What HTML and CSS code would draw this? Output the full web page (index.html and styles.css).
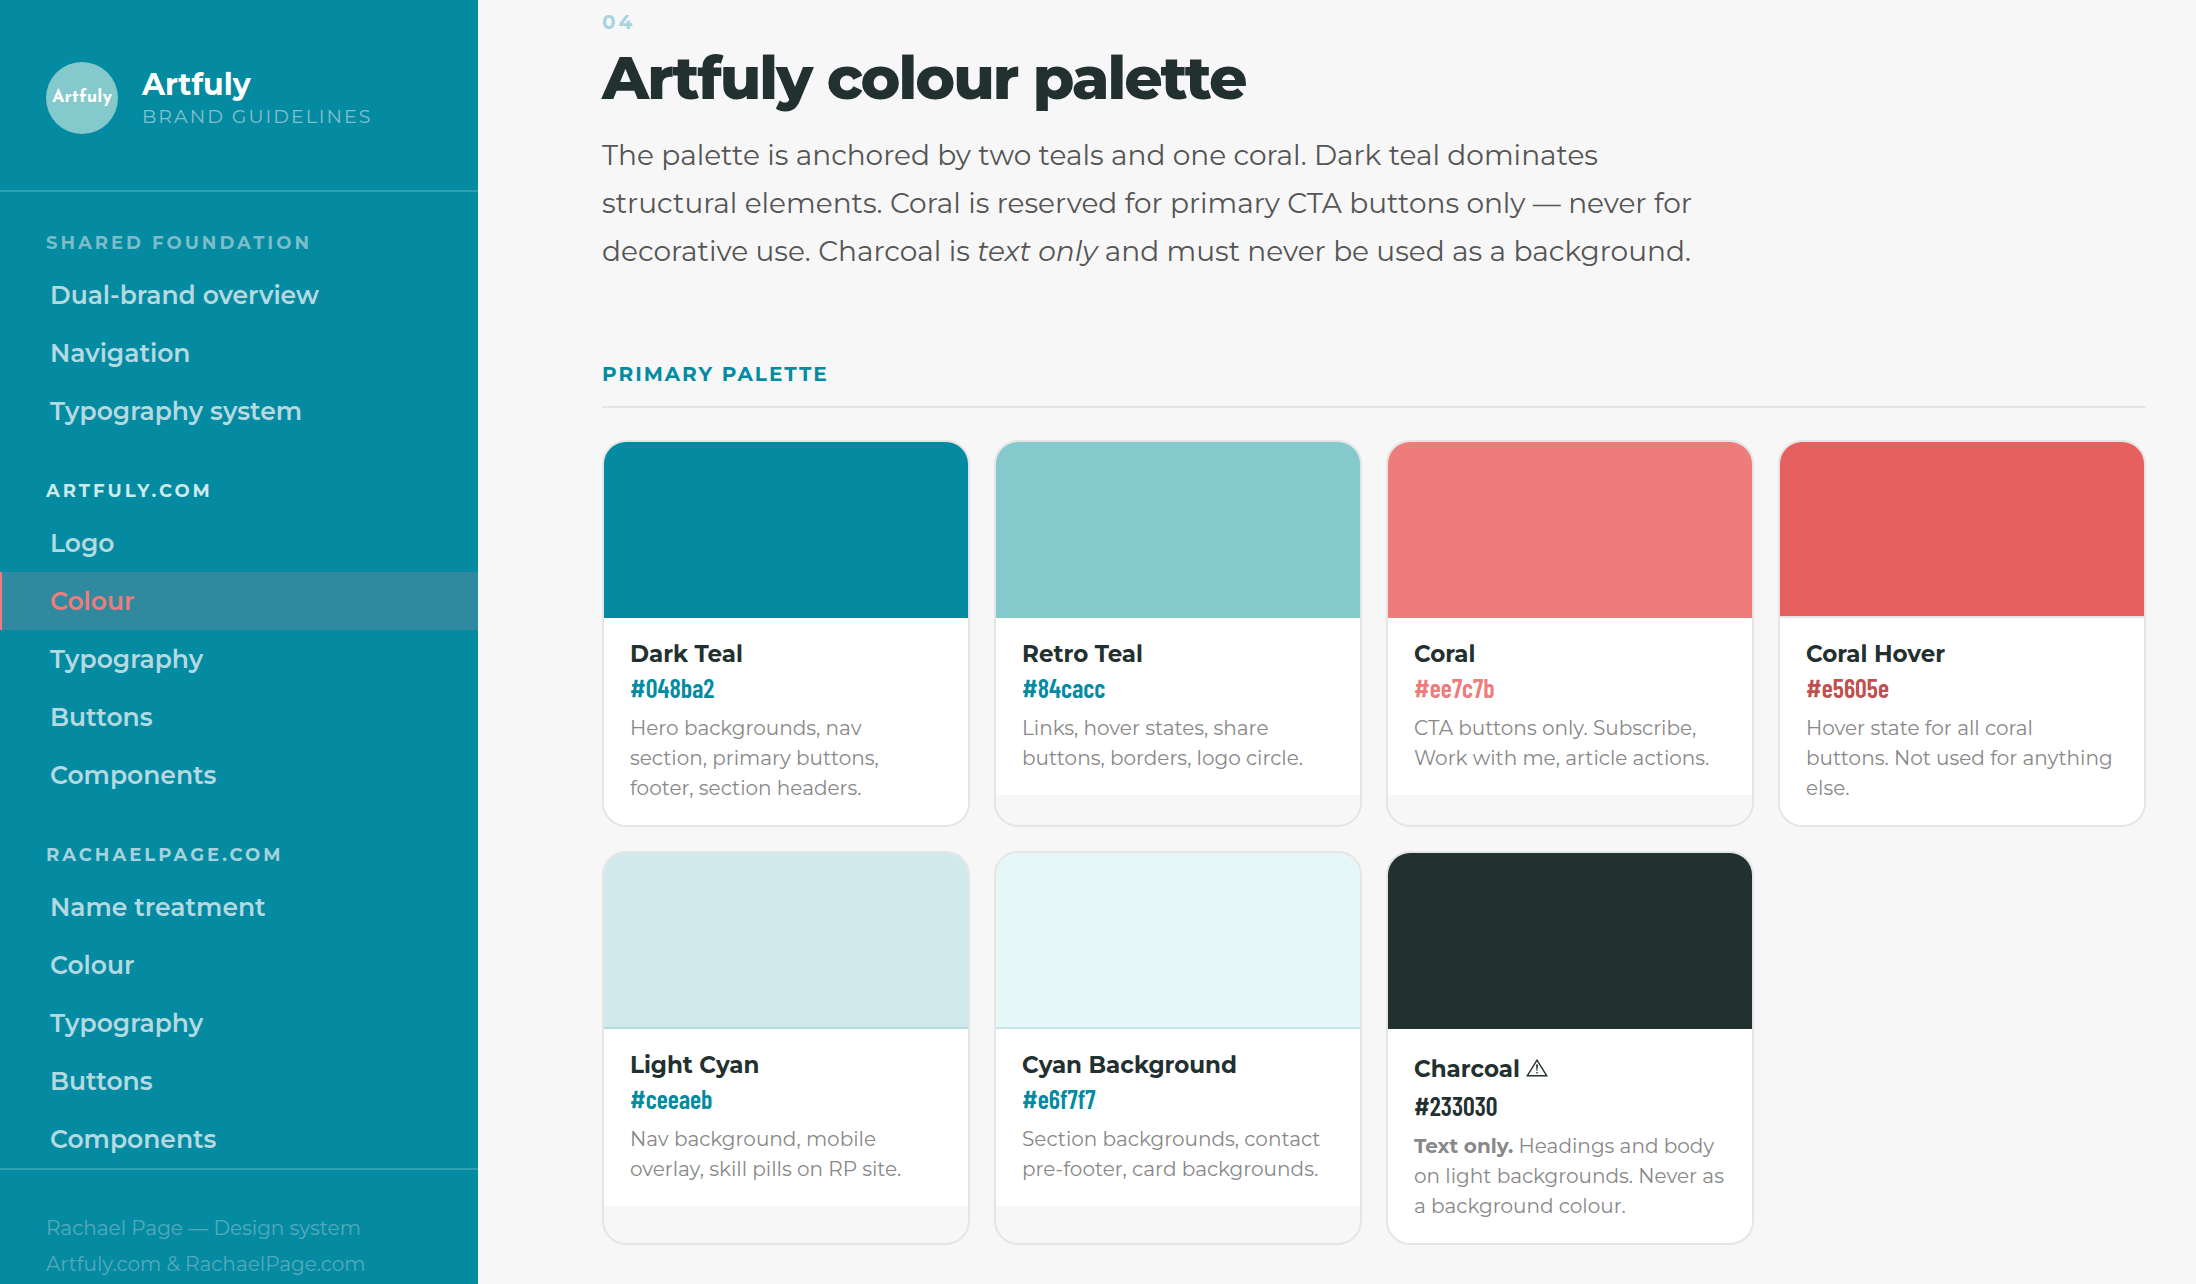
FILE: index.html
```html
<!DOCTYPE html>
<html lang="en">
<head>
  <meta charset="UTF-8">
  <meta name="viewport" content="width=device-width, initial-scale=1">
  <title>Artfuly Brand Guidelines</title>
  <link rel="stylesheet" href="styles.css">
</head>
<body>
  <aside class="sidebar">
    <div class="brand">
      <div class="brand-logo">Artfuly</div>
      <div class="brand-text">
        <div class="brand-name">Artfuly</div>
        <div class="brand-sub">Brand guidelines</div>
      </div>
    </div>

    <nav class="nav">
      <div class="nav-group">
        <div class="nav-label">Shared foundation</div>
        <a href="#overview">Dual-brand overview</a>
        <a href="#navigation">Navigation</a>
        <a href="#type-system">Typography system</a>
      </div>
      <div class="nav-group">
        <div class="nav-label nav-label-current">Artfuly.com</div>
        <a href="#a-logo">Logo</a>
        <a href="#a-colour" class="active">Colour</a>
        <a href="#a-typography">Typography</a>
        <a href="#a-buttons">Buttons</a>
        <a href="#a-components">Components</a>
      </div>
      <div class="nav-group">
        <div class="nav-label nav-label-rp">RachaelPage.com</div>
        <a href="#rp-name">Name treatment</a>
        <a href="#rp-colour">Colour</a>
        <a href="#rp-typography">Typography</a>
        <a href="#rp-buttons">Buttons</a>
        <a href="#rp-components">Components</a>
      </div>
    </nav>

    <div class="sidebar-footer">
      Rachael Page — Design system<br>
      Artfuly.com &amp; RachaelPage.com
    </div>
  </aside>

  <main class="main">
    <section id="a-colour">
      <div class="section-number">04</div>
      <h1>Artfuly colour palette</h1>
      <p class="intro">The palette is anchored by two teals and one coral. Dark teal dominates structural elements. Coral is reserved for primary CTA buttons only — never for decorative use. Charcoal is <em>text only</em> and must never be used as a background.</p>

      <h2>Primary palette</h2>
      <div class="swatches">
        <div class="swatch">
          <div class="swatch-color dark-teal"></div>
          <div class="swatch-info">
            <div class="swatch-name">Dark Teal</div>
            <div class="swatch-hex">#048ba2</div>
            <div class="swatch-use">Hero backgrounds, nav section, primary buttons, footer, section headers.</div>
          </div>
        </div>
        <div class="swatch">
          <div class="swatch-color retro-teal"></div>
          <div class="swatch-info">
            <div class="swatch-name">Retro Teal</div>
            <div class="swatch-hex">#84cacc</div>
            <div class="swatch-use">Links, hover states, share buttons, borders, logo circle.</div>
          </div>
        </div>
        <div class="swatch">
          <div class="swatch-color coral"></div>
          <div class="swatch-info">
            <div class="swatch-name">Coral</div>
            <div class="swatch-hex hex-coral">#ee7c7b</div>
            <div class="swatch-use">CTA buttons only. Subscribe, Work with me, article actions.</div>
          </div>
        </div>
        <div class="swatch">
          <div class="swatch-color coral-hover"></div>
          <div class="swatch-info">
            <div class="swatch-name">Coral Hover</div>
            <div class="swatch-hex hex-coral-hover">#e5605e</div>
            <div class="swatch-use">Hover state for all coral buttons. Not used for anything else.</div>
          </div>
        </div>
        <div class="swatch">
          <div class="swatch-color light-cyan"></div>
          <div class="swatch-info">
            <div class="swatch-name">Light Cyan</div>
            <div class="swatch-hex">#ceeaeb</div>
            <div class="swatch-use">Nav background, mobile overlay, skill pills on RP site.</div>
          </div>
        </div>
        <div class="swatch">
          <div class="swatch-color cyan-bg"></div>
          <div class="swatch-info">
            <div class="swatch-name">Cyan Background</div>
            <div class="swatch-hex">#e6f7f7</div>
            <div class="swatch-use">Section backgrounds, contact pre-footer, card backgrounds.</div>
          </div>
        </div>
        <div class="swatch">
          <div class="swatch-color charcoal"></div>
          <div class="swatch-info">
            <div class="swatch-name swatch-name-warn">Charcoal
              <svg class="warn" viewBox="0 0 22 18" role="img" aria-label="Warning">
                <path d="M11 1.2 L20.8 16.8 H1.2 Z" fill="none" stroke="currentColor" stroke-width="1.4"/>
                <path d="M10 5.5 H12 L11.4 12 H10.6 Z M10.3 13 H11.7 V14.6 H10.3 Z" fill="currentColor"/>
              </svg>
            </div>
            <div class="swatch-hex hex-charcoal">#233030</div>
            <div class="swatch-use"><strong>Text only.</strong> Headings and body on light backgrounds. Never as a background colour.</div>
          </div>
        </div>
      </div>
    </section>
  </main>
</body>
</html>
```
FILE: styles.css
```css
* {
  box-sizing: border-box;
  margin: 0;
  padding: 0;
}
body {
  display: flex;
  height: 100vh;
  overflow: hidden;
  font-family: 'Montserrat', 'Inter', sans-serif;
  background: #f7f7f7;
  color: #233030;
}

/* Sidebar */
.sidebar {
  flex: 0 0 478px;
  background: #048ba2;
  overflow: hidden;
}
.brand {
  display: flex;
  align-items: center;
  gap: 24px;
  padding: 62px 46px 56px;
  border-bottom: 2px solid rgba(206, 234, 235, 0.22);
}
.brand-logo {
  width: 72px;
  height: 72px;
  border-radius: 50%;
  background: #84cacc;
  color: white;
  font-family: 'Josefin Sans', 'Lato', sans-serif;
  font-size: 18px;
  font-weight: 700;
  line-height: 72px;
  text-align: center;
}
.brand-text {
  padding-top: 2px;
}
.brand-name {
  color: white;
  font-size: 30px;
  font-weight: 700;
  line-height: 36px;
}
.brand-sub {
  color: #84bfcd;
  font-size: 19px;
  letter-spacing: 2px;
  line-height: 28px;
  text-transform: uppercase;
}
.nav {
  display: flex;
  flex-direction: column;
  gap: 38px;
  padding-top: 38px;
}
.nav-label {
  padding: 1px 46px 11px;
  color: #7cbdc9;
  font-size: 18px;
  font-weight: 700;
  letter-spacing: 3px;
  line-height: 24px;
  text-transform: uppercase;
}
.nav-label-current {
  color: #ceeaeb;
}
.nav-label-rp {
  color: #a5d2dc;
}
.nav a {
  display: block;
  padding: 0 46px 0 48px;
  border-left: 2px solid transparent;
  color: #b4d9e1;
  font-size: 25px;
  font-weight: 600;
  line-height: 58px;
  text-decoration: none;
}
.nav a.active {
  background: #2f8aa0;
  border-left-color: #ee7c7b;
  color: #ee7c7b;
}
.sidebar-footer {
  padding: 40px 46px;
  border-top: 2px solid rgba(206, 234, 235, 0.22);
  color: #56a9ba;
  font-size: 20px;
  line-height: 36px;
}

/* Main content */
.main {
  flex: 1;
  min-width: 0;
  padding: 8px 50px 40px 124px;
}
.section-number {
  color: #a9d4de;
  font-size: 20px;
  font-weight: 700;
  letter-spacing: 3px;
  line-height: 28px;
}
h1 {
  margin: 7px 0 18px;
  font-size: 60px;
  font-weight: 800;
  letter-spacing: -2px;
  line-height: 70px;
}
.intro {
  max-width: 1120px;
  color: #555;
  font-size: 28px;
  line-height: 48px;
}
h2 {
  margin: 85px 0 32px;
  padding-bottom: 18px;
  border-bottom: 2px solid #e5e5e5;
  color: #048ba2;
  font-size: 20px;
  font-weight: 700;
  letter-spacing: 2px;
  line-height: 28px;
  text-transform: uppercase;
}
.swatches {
  display: grid;
  grid-template-columns: repeat(4, 1fr);
  gap: 24px;
}
.swatch {
  border: 2px solid #e5e5e5;
  border-radius: 24px;
  overflow: hidden;
}
.swatch-color {
  height: 176px;
}
.dark-teal { background: #048ba2; }
.retro-teal { background: #84cacc; }
.coral { background: #ee7c7b; }
.coral-hover { background: #e5605e; border-bottom: 2px solid #e5e5e5; }
.light-cyan { background: #d0e9ec; border-bottom: 2px solid #b3dcdf; }
.cyan-bg { background: #e6f7f7; border-bottom: 2px solid #c5e7e9; }
.charcoal { background: #233030; }
.swatch-info {
  padding: 22px 26px;
  background: white;
}
.swatch-name {
  margin-bottom: 4px;
  font-size: 23px;
  font-weight: 700;
  line-height: 29px;
}
.swatch-name-warn {
  line-height: 36px;
}
.warn {
  width: 22px;
  height: 18px;
}
.swatch-hex {
  margin-bottom: 10px;
  color: #048ba2;
  font-family: 'Barlow Condensed', 'Roboto Condensed', sans-serif;
  font-size: 26px;
  font-weight: 600;
  line-height: 30px;
}
.hex-coral { color: #ee7c7b; }
.hex-coral-hover { color: #c0504e; }
.hex-charcoal { color: #233030; }
.swatch-use {
  color: #888;
  font-size: 20px;
  line-height: 30px;
}
```
